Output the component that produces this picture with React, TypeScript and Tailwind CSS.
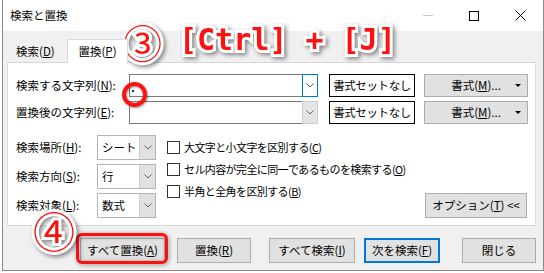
import type { ReactNode } from "react";

// 検索と置換 dialog (Excel) with red annotations
const ui = "font-['Yu_Gothic_UI','Noto_Sans_CJK_JP',sans-serif]";

function Chevron({ color = "#606060" }: { color?: string }) {
  return (
    <svg width="8" height="5" viewBox="0 0 8 5">
      <polyline points="0.5,0.5 4,4 7.5,0.5" fill="none" stroke={color} strokeWidth="1" />
    </svg>
  );
}

function Btn({ children, w, className = "" }: { children: ReactNode; w: string; className?: string }) {
  return (
    <div
      className={`${w} h-[25px] flex items-center justify-center bg-[#e1e1e1] border border-[#adadad] text-[11.5px] text-black whitespace-nowrap ${className}`}
    >
      {children}
    </div>
  );
}

function Combo({ focused }: { focused?: boolean }) {
  return (
    <div className="w-[189px] h-[23px] flex bg-white border border-[#7a7a7a]">
      <div className="flex-1" />
      <div
        className={
          focused
            ? "w-[16px] -my-px -mr-px flex items-center justify-center border border-[#0078d7] bg-white"
            : "w-[16px] -my-px -mr-px flex items-center justify-center border border-[#cccccc] bg-[#e5e5e5]"
        }
      >
        <Chevron />
      </div>
    </div>
  );
}

function Select({ value }: { value: string }) {
  return (
    <div className="w-[59px] h-[25px] flex bg-white border border-[#b5b5b5]">
      <div className="flex-1 flex items-center pl-[4px] text-[11.5px]">{value}</div>
      <div className="w-[16px] flex items-center justify-center bg-[#e1e1e1] border-l border-[#cfcfcf]">
        <Chevron />
      </div>
    </div>
  );
}

function Check({ children }: { children: ReactNode }) {
  return (
    <div className="flex items-center h-[22px]">
      <div className="w-[13px] h-[13px] border border-[#333] bg-white shrink-0" />
      <span className="ml-[4px] text-[11px] tracking-[-0.6px] whitespace-nowrap">{children}</span>
    </div>
  );
}

const annot =
  "absolute text-[#ff1010] [-webkit-text-stroke:6px_white] [paint-order:stroke_fill] [filter:drop-shadow(2px_2px_2px_rgba(0,0,0,0.45))] leading-none";

export default function App() {
  return (
    <div className={`relative w-[544px] h-[273px] bg-white overflow-hidden ${ui} text-black`}>
      <div className="ml-[2px] w-[542px] h-[271px] flex flex-col bg-[#f0f0f0] border-l border-r border-b border-[#8a8a8a]">
        {/* title bar */}
        <div className="h-[31px] flex items-center bg-white">
          <span className="pl-[7px] text-[11.5px]">検索と置換</span>
          <div className="ml-auto flex h-full">
            <div className="w-[46px] flex items-center justify-center">
              <div className="w-[10px] h-px bg-[#c8c8c8]" />
            </div>
            <div className="w-[46px] flex items-center justify-center">
              <div className="w-[10px] h-[10px] border border-black" />
            </div>
            <div className="w-[46px] flex items-center justify-center">
              <svg width="11" height="11" viewBox="0 0 11 11">
                <path d="M0.5 0.5 L10.5 10.5 M10.5 0.5 L0.5 10.5" stroke="black" strokeWidth="1" />
              </svg>
            </div>
          </div>
        </div>

        {/* tabs */}
        <div className="h-[31px] flex items-end pl-[6px] text-[11.5px]">
          <div className="w-[58px] h-[21px] flex items-center pl-[7px]">
            検索(<u>D</u>)
          </div>
          <div className="relative z-10 -mb-px w-[61px] h-[24px] flex items-center justify-center bg-white border-t border-l border-r border-[#d9d9d9]">
            置換(<u>P</u>)
          </div>
        </div>

        {/* panel */}
        <div className="ml-[4px] mr-[7px] h-[164px] bg-white border border-[#d9d9d9] pl-[8px] pt-[11px] text-[11.5px]">
          <div className="flex items-center h-[23px]">
            <div className="w-[113px]">検索する文字列(<u>N</u>):</div>
            <Combo focused />
            <div className="ml-[11px] w-[86px] h-[23px] flex items-center justify-center border border-black bg-white tracking-[-0.4px]">
              書式セットなし
            </div>
            <Btn w="w-[104px]" className="ml-[9px] !h-[23px] relative">
              書式(<u>M</u>)...
              <span className="absolute right-[6px] top-[9px] w-0 h-0 border-l-[3px] border-r-[3px] border-t-[3px] border-l-transparent border-r-transparent border-t-black" />
            </Btn>
          </div>
          <div className="flex items-center h-[23px] mt-[4px]">
            <div className="w-[113px]">置換後の文字列(<u>E</u>):</div>
            <Combo />
            <div className="ml-[11px] w-[86px] h-[23px] flex items-center justify-center border border-black bg-white tracking-[-0.4px]">
              書式セットなし
            </div>
            <Btn w="w-[104px]" className="ml-[9px] !h-[23px] relative">
              書式(<u>M</u>)...
              <span className="absolute right-[6px] top-[9px] w-0 h-0 border-l-[3px] border-r-[3px] border-t-[3px] border-l-transparent border-r-transparent border-t-black" />
            </Btn>
          </div>

          <div className="flex mt-[11px]">
            <div className="flex flex-col gap-[4px]">
              <div className="flex items-center">
                <div className="w-[81px]">検索場所(<u>H</u>):</div>
                <Select value="シート" />
              </div>
              <div className="flex items-center">
                <div className="w-[81px]">検索方向(<u>S</u>):</div>
                <Select value="行" />
              </div>
              <div className="flex items-center">
                <div className="w-[81px]">検索対象(<u>L</u>):</div>
                <Select value="数式" />
              </div>
            </div>
            <div className="ml-[11px] pt-[1px] flex flex-col">
              <Check>
                大文字と小文字を区別する(<u>C</u>)
              </Check>
              <Check>
                セル内容が完全に同一であるものを検索する(<u>O</u>)
              </Check>
              <Check>
                半角と全角を区別する(<u>B</u>)
              </Check>
            </div>
            <div className="ml-auto mr-[8px] self-end">
              <Btn w="w-[102px]">
                オプション(<u>T</u>) &lt;&lt;
              </Btn>
            </div>
          </div>
        </div>

        {/* bottom buttons */}
        <div className="flex mt-[12px] pl-[77px]">
          <Btn w="w-[85px]">すべて置換(<u>A</u>)</Btn>
          <Btn w="w-[74px]" className="ml-[12px]">
            置換(<u>R</u>)
          </Btn>
          <Btn w="w-[86px]" className="ml-[18px]">
            すべて検索(<u>I</u>)
          </Btn>
          <Btn w="w-[76px]" className="ml-[9px] border-2 !border-[#0078d7]">
            次を検索(<u>F</u>)
          </Btn>
          <Btn w="w-[74px]" className="ml-[22px]">
            閉じる
          </Btn>
        </div>
      </div>

      {/* annotations */}
      <div className="absolute left-[132px] top-[90px] w-[2px] h-[2px] bg-[#333]" />
      <div className="absolute left-[122px] top-[82px] w-[25px] h-[25px] rounded-full border-[4px] border-[#ff1010] [filter:drop-shadow(1px_1px_1px_rgba(0,0,0,0.4))]" />
      <div className="absolute left-[76px] top-[233px] w-[92px] h-[31px] rounded-[6px] border-[3px] border-[#ff1010] [filter:drop-shadow(1px_1px_2px_rgba(0,0,0,0.4))]" />

      <div className={`${annot} left-[123px] top-[22px] text-[39px] font-['Noto_Sans_CJK_JP',sans-serif]`}>③</div>
      <div className={`${annot} left-[179px] top-[25px] text-[30px] font-bold font-['DejaVu_Sans_Mono',monospace] whitespace-pre`}>
        [Ctrl] + [J]
      </div>
      <div className={`${annot} left-[33px] top-[209px] text-[42px] font-['Noto_Sans_CJK_JP',sans-serif]`}>④</div>
    </div>
  );
}
